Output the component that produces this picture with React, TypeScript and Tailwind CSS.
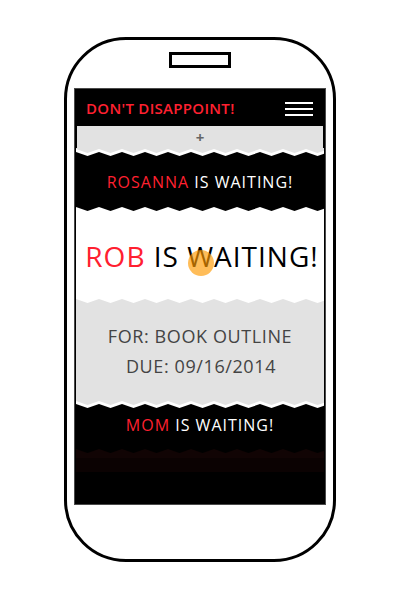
const W = 248;

function zig(offset: number, amp: number, period: number) {
  const pts: string[] = [];
  let i = 0;
  for (let x = -period; x <= W + period; x += period / 2) {
    const y = offset + (i % 2 === 0 ? 0 : amp);
    pts.push(`${x.toFixed(1)},${y}`);
    i++;
  }
  return pts;
}

// zigzag edge: upper colour over lower colour, optional white band between
function Wave({ top, bottom, band = false, h = 10 }: { top: string; bottom: string; band?: boolean; h?: number }) {
  const edge = zig(1, 4, 23);
  const bandEdge = zig(4, 4, 23);
  return (
    <svg width={W} height={h} viewBox={`0 0 ${W} ${h}`} className="block">
      <rect width={W} height={h} fill={bottom} />
      {band && <path d={`M0,0 L${bandEdge.join(" L")} L${W},0 Z`} fill="#ffffff" />}
      <path d={`M0,0 L${edge.join(" L")} L${W},0 Z`} fill={top} />
    </svg>
  );
}

export default function App() {
  return (
    <div className="w-[400px] h-[600px] bg-white pl-[64px] pt-[37px] font-['Open_Sans',sans-serif]">
      <div className="w-[272px] h-[525px] border-[3px] border-black rounded-[62px] flex flex-col items-center pt-[12px]">
        <div className="w-[62px] h-[16px] border-[3px] border-black" />
        <div className="mt-[20px] w-[252px] h-[417px] bg-black border border-[#4a4a4a] px-[1px] flex flex-col relative overflow-hidden whitespace-nowrap">
          {/* header */}
          <div className="h-[37px] pt-[2px] flex items-center justify-between pl-[10px] pr-[11px] shrink-0">
            <span className="text-[#ff2030] text-[15px] font-semibold tracking-[0.3px]">DON'T DISAPPOINT!</span>
            <div className="flex flex-col gap-[4px]">
              <div className="w-[28px] h-[2px] bg-white" />
              <div className="w-[28px] h-[2px] bg-white" />
              <div className="w-[28px] h-[2px] bg-white" />
            </div>
          </div>
          {/* add bar */}
          <div className="h-[22px] mx-[1px] bg-[#e2e2e2] flex items-center justify-center text-[#666] text-[15px] font-bold leading-none shrink-0">
            +
          </div>
          <Wave top="#e2e2e2" bottom="#000000" band />
          {/* rosanna */}
          <div className="h-[48px] flex items-center justify-center text-[16px] tracking-[1px] text-white shrink-0">
            <span className="text-[#ff2030]">ROSANNA</span>&nbsp;IS WAITING!
          </div>
          <Wave top="#000000" bottom="#ffffff" />
          {/* rob */}
          <div className="h-[82px] pb-[2px] pl-[4px] bg-white flex items-center justify-center text-[28px] tracking-[1px] text-black shrink-0">
            <span className="text-[#ff2030]">ROB</span>&nbsp;IS WAITING!
          </div>
          <Wave top="#ffffff" bottom="#e2e2e2" />
          {/* details */}
          <div className="h-[92px] pb-[6px] bg-[#e2e2e2] flex flex-col items-center justify-center gap-[5px] text-[#444] text-[18px] tracking-[0.6px] leading-[25px] shrink-0">
            <div>FOR: BOOK OUTLINE</div>
            <div className="pl-[2px]">DUE: 09/16/2014</div>
          </div>
          <Wave top="#e2e2e2" bottom="#000000" band />
          {/* mom */}
          <div className="h-[30px] flex items-center justify-center text-[16px] tracking-[1px] text-white shrink-0">
            <span className="text-[#ff2030]">MOM</span>&nbsp;IS WAITING!
          </div>
          <div className="mt-[8px]">
            <Wave top="#000000" bottom="#110404" />
          </div>
          <div className="h-[14px] bg-[#0b0202]" />
          <div className="flex-1 bg-black" />
          <div className="absolute left-[113px] top-[161px] w-[26px] h-[26px] rounded-full bg-[#ff9900]/65" />
        </div>
      </div>
    </div>
  );
}
